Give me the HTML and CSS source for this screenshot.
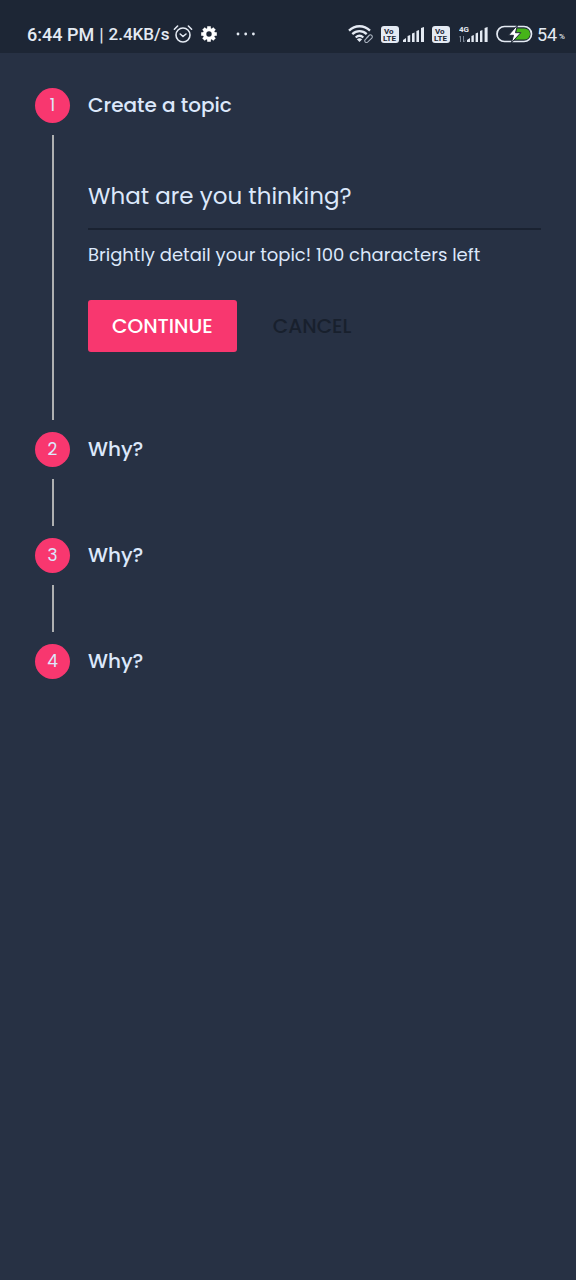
FILE: index.html
```html
<!DOCTYPE html>
<html lang="en">
<head>
<meta charset="utf-8">
<meta name="viewport" content="width=device-width, initial-scale=1">
<title>Create a topic</title>
<link rel="stylesheet" href="styles.css">
</head>
<body>
<header class="status">
  <div class="status-left">
    <span class="clock">6:44 PM</span>
    <span class="divider">|</span>
    <span class="speed">2.4KB/s</span>
    <svg class="alarm" width="20" height="20" viewBox="0 0 20 20" fill="none" stroke="#e4eaf3" stroke-width="1.6" stroke-linecap="round" stroke-linejoin="round" aria-hidden="true">
      <circle cx="10" cy="11" r="7"/><path d="M7.2 10l2.8 2.5 3-2.5M1.4 5.2L4.6 2M18.6 5.2L15.4 2"/>
    </svg>
    <svg class="gear" width="16" height="16" viewBox="0 0 16 16" aria-hidden="true">
      <circle cx="8" cy="8" r="4.4" fill="none" stroke="#fff" stroke-width="3.4"/>
      <path d="M8 .2v3M8 12.8v3M.2 8h3M12.8 8h3M2.5 2.5l2 2M11.5 11.5l2 2M13.5 2.5l-2 2M4.5 11.5l-2 2" stroke="#fff" stroke-width="3.6"/>
    </svg>
    <svg class="dots" width="20" height="4" viewBox="0 0 20 4" fill="#e4eaf3" aria-hidden="true">
      <circle cx="2" cy="2" r="1.4"/><circle cx="9.7" cy="2" r="1.4"/><circle cx="17.4" cy="2" r="1.4"/>
    </svg>
  </div>
  <div class="status-right">
    <svg width="26" height="18" viewBox="0 0 26 18" fill="none" aria-hidden="true">
      <path d="M1 5.6C7-.2 16-.2 22 5.6M4.3 9.2c4.2-4 10.2-4 14.4 0M7.7 12.5c2.4-2.2 5.2-2.2 7.6 0" stroke="#e4eaf3" stroke-width="2.3"/>
      <path d="M8.8 14.2q2.7-2 5.4 0L11.5 17z" fill="#e4eaf3"/>
      <path d="M18.4 13.2l2.6-2.7a1.9 1.9 0 0 1 2.8 2.6l-4.2 4a1.7 1.7 0 0 1-2.4-2.4l3.4-3.3" stroke="#1d2635" stroke-width="3"/>
      <path d="M18.4 13.2l2.6-2.7a1.9 1.9 0 0 1 2.8 2.6l-4.2 4a1.7 1.7 0 0 1-2.4-2.4l3.4-3.3" stroke="#aab3c0" stroke-width="1.1"/>
    </svg>
    <svg class="volte" width="18" height="17" viewBox="0 0 18 17" aria-hidden="true">
      <rect width="18" height="17" rx="3" fill="#e4eaf3"/>
      <text class="volte-text" x="3" y="8">Vo</text><text class="volte-text" x="2" y="15">LTE</text>
    </svg>
    <svg class="signal" width="22" height="17" viewBox="0 0 22 17" fill="#e4eaf3" aria-hidden="true">
      <path d="M0 16v-2l3-2v4zM4.6 16v-6l2.6-1v7zM9 16V7.6l2.6-1V16zM13.4 16V5l2.6-1v12zM18 16V2l3-1v15z"/>
    </svg>
    <svg class="volte" width="18" height="17" viewBox="0 0 18 17" aria-hidden="true">
      <rect width="18" height="17" rx="3" fill="#e4eaf3"/>
      <text class="volte-text" x="3" y="8">Vo</text><text class="volte-text" x="2" y="15">LTE</text>
    </svg>
    <svg class="mobile" width="30" height="19" viewBox="0 0 30 19" fill="#e4eaf3" aria-hidden="true">
      <text class="net-text" x="0" y="7">4G</text>
      <path d="M1.5 17v-6M0 12.5l1.5-1.5M4.5 11v6M6 15.5L4.5 17" stroke="#7d8898" fill="none"/>
      <path d="M8 17v-2l3-2v4zM12.4 17v-6l2.4-1v7zM16.6 17V8.6l2.4-1V17zM21 17V6l2.4-1v12zM25.6 17V3l3-1v15z"/>
    </svg>
    <svg class="battery" width="37" height="18" viewBox="0 0 37 18" aria-hidden="true">
      <rect x="1" y="1.5" width="34.5" height="15" rx="7.5" fill="none" stroke="#e4eaf3" stroke-width="1.7"/>
      <path d="M21 3.5h7.5a5.5 5.5 0 0 1 0 11H18z" fill="#46b419"/>
      <path d="M21.5 0L12.5 10.3h5L15.3 18l9.5-10.3h-5.3z" fill="#fff" stroke="#1d2635"/>
    </svg>
    <span class="level">54</span><span class="percent">%</span>
  </div>
</header>

<main>
  <ol class="stepper">
    <li class="step">
      <div class="rail"><span class="badge">1</span><span class="line"></span></div>
      <div class="content">
        <h2 class="title">Create a topic</h2>
        <form class="topic-form">
          <input class="topic-input" id="topic" type="text" maxlength="100" placeholder="What are you thinking?" autocomplete="off">
          <label class="hint" for="topic">Brightly detail your topic! 100 characters left</label>
          <div class="actions">
            <button class="button primary" type="button">CONTINUE</button>
            <button class="button plain" type="button">CANCEL</button>
          </div>
        </form>
      </div>
    </li>
    <li class="step">
      <div class="rail"><span class="badge">2</span><span class="line"></span></div>
      <div class="content"><h2 class="title">Why?</h2></div>
    </li>
    <li class="step">
      <div class="rail"><span class="badge">3</span><span class="line"></span></div>
      <div class="content"><h2 class="title">Why?</h2></div>
    </li>
    <li class="step">
      <div class="rail"><span class="badge">4</span></div>
      <div class="content"><h2 class="title">Why?</h2></div>
    </li>
  </ol>
</main>
</body>
</html>
```

FILE: styles.css
```css
* {
  box-sizing: border-box;
}

body {
  margin: 0;
  min-height: 100vh;
  background: #273144;
  color: #dce8fb;
  font-family: Poppins, Inter, "Liberation Sans", sans-serif;
}

.status {
  display: flex;
  justify-content: space-between;
  height: 53px;
  padding: 15px 11px 0 27px;
  background: #1d2635;
  color: #e4eaf3;
  font-family: Roboto, "Liberation Sans", sans-serif;
  font-weight: 500;
}

.status-left,
.status-right {
  display: flex;
  align-items: center;
  white-space: nowrap;
}

.clock,
.divider {
  font-size: 18px;
}

.divider {
  margin: 0 5px;
  font-weight: 400;
}

.speed {
  font-size: 17px;
}

.alarm {
  margin-left: 4px;
}

.gear {
  margin-left: 8px;
}

.dots {
  margin-left: 19px;
}

.volte {
  margin-left: 7px;
}

.volte-text {
  fill: #1d2635;
  font-size: 8px;
  font-weight: 700;
}

.signal {
  margin-left: 4px;
}

.mobile {
  margin-left: 9px;
}

.net-text {
  font-size: 8px;
  font-weight: 700;
}

.battery {
  margin: 0 4px 0 7px;
}

.level {
  font-size: 18px;
  font-weight: 400;
}

.percent {
  margin: 5px 0 0 2px;
  font-size: 8px;
}

.stepper {
  margin: 0;
  padding: 35px;
  list-style: none;
}

.step {
  display: grid;
  grid-template-columns: 35px 1fr;
  column-gap: 18px;
}

.step:not(:last-child) {
  min-height: 106px;
}

.rail {
  display: flex;
  flex-direction: column;
  align-items: center;
}

.badge {
  width: 35px;
  height: 35px;
  border-radius: 50%;
  background: #f8376f;
  font-size: 17px;
  line-height: 35px;
  text-align: center;
}

.line {
  flex: 1;
  width: 2px;
  margin: 12px 0;
  background: #aeb0b1;
}

.title {
  margin: 0;
  font-size: 20px;
  font-weight: 500;
  line-height: 35px;
}

.topic-form {
  display: flex;
  flex-direction: column;
  padding: 36px 0 80px;
}

.topic-input {
  width: 100%;
  height: 71px;
  padding: 4px 0 0;
  border: 0;
  border-bottom: 2px solid #1a2231;
  border-radius: 0;
  outline: 0;
  background: transparent;
  color: inherit;
  font-family: inherit;
  font-size: 23px;
}

.topic-input::placeholder {
  color: #dce8fb;
  opacity: 1;
}

.hint {
  padding: 13px 0 33px;
  font-size: 18px;
  line-height: 24px;
}

.actions {
  display: flex;
  gap: 12px;
}

.button {
  height: 52px;
  padding: 0 24px;
  border: 0;
  border-radius: 3px;
  font-family: inherit;
  font-size: 20px;
  font-weight: 500;
  cursor: pointer;
}

.primary {
  background: #f8376f;
  color: #fff;
}

.plain {
  background: transparent;
  color: #18202d;
}
```
